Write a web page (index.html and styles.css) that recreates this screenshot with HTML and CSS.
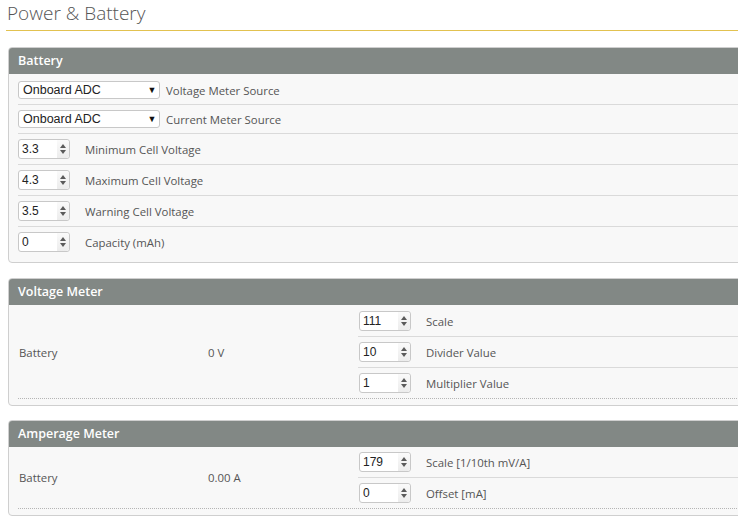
FILE: index.html
```html
<!DOCTYPE html>
<html>
<head>
<meta charset="utf-8">
<link rel="stylesheet" href="styles.css">
</head>
<body>
<div class="page">
  <div class="title">Power &amp; Battery</div>

  <div class="panel">
    <div class="panel-head">Battery</div>
    <div class="panel-body">
      <div class="row">
        <div class="select"><span>Onboard ADC</span><span class="arrow">▼</span></div>
        <span class="label sel-label">Voltage Meter Source</span>
      </div>
      <div class="row">
        <div class="select"><span>Onboard ADC</span><span class="arrow">▼</span></div>
        <span class="label sel-label">Current Meter Source</span>
      </div>
      <div class="row num">
        <div class="spin"><span class="val">3.3</span><span class="btns"><i class="up"></i><i class="down"></i></span></div>
        <span class="label">Minimum Cell Voltage</span>
      </div>
      <div class="row num">
        <div class="spin"><span class="val">4.3</span><span class="btns"><i class="up"></i><i class="down"></i></span></div>
        <span class="label">Maximum Cell Voltage</span>
      </div>
      <div class="row num">
        <div class="spin"><span class="val">3.5</span><span class="btns"><i class="up"></i><i class="down"></i></span></div>
        <span class="label">Warning Cell Voltage</span>
      </div>
      <div class="row num last">
        <div class="spin"><span class="val">0</span><span class="btns"><i class="up"></i><i class="down"></i></span></div>
        <span class="label">Capacity (mAh)</span>
      </div>
    </div>
  </div>

  <div class="panel tight">
    <div class="panel-head">Voltage Meter</div>
    <div class="panel-body meter-body">
      <div class="meter">
        <div class="m-name">Battery</div>
        <div class="m-value">0 V</div>
        <div class="m-controls">
          <div class="row num">
            <div class="spin"><span class="val">111</span><span class="btns"><i class="up"></i><i class="down"></i></span></div>
            <span class="label">Scale</span>
          </div>
          <div class="row num">
            <div class="spin"><span class="val">10</span><span class="btns"><i class="up"></i><i class="down"></i></span></div>
            <span class="label">Divider Value</span>
          </div>
          <div class="row num last">
            <div class="spin"><span class="val">1</span><span class="btns"><i class="up"></i><i class="down"></i></span></div>
            <span class="label">Multiplier Value</span>
          </div>
        </div>
      </div>
    </div>
  </div>

  <div class="panel">
    <div class="panel-head">Amperage Meter</div>
    <div class="panel-body meter-body amp">
      <div class="meter">
        <div class="m-name">Battery</div>
        <div class="m-value">0.00 A</div>
        <div class="m-controls">
          <div class="row num">
            <div class="spin"><span class="val">179</span><span class="btns"><i class="up"></i><i class="down"></i></span></div>
            <span class="label">Scale [1/10th mV/A]</span>
          </div>
          <div class="row num last">
            <div class="spin"><span class="val">0</span><span class="btns"><i class="up"></i><i class="down"></i></span></div>
            <span class="label">Offset [mA]</span>
          </div>
        </div>
      </div>
    </div>
  </div>
</div>
</body>
</html>
```

FILE: styles.css
```css
html, body {
  margin: 0;
  padding: 0;
  background: #ffffff;
  overflow: hidden;
}

body {
  font-family: "Open Sans", "Liberation Sans", sans-serif;
  font-size: 11.4px;
  color: #555555;
}

.page {
  padding-left: 8px;
  width: 760px;
}

.title {
  margin-left: -2px;
  height: 30px;
  border-bottom: 1px solid #e2c250;
  font-size: 19px;
  font-weight: 300;
  line-height: 26px;
  color: #555555;
  padding-left: 1px;
  margin-bottom: 16px;
}

.panel {
  border: 1px solid #cfcfcf;
  border-radius: 4px;
  background: #f8f8f8;
  margin-bottom: 15px;
  overflow: hidden;
}

.panel.tight {
  margin-bottom: 14px;
}

.panel-head {
  background: #828885;
  color: #ffffff;
  font-weight: 600;
  font-size: 12.5px;
  height: 26px;
  line-height: 26px;
  padding-left: 9px;
}

.panel-body {
  padding: 2px 0 5px 9px;
}

.row {
  display: flex;
  align-items: center;
  padding: 5px 0;
  border-bottom: 1px solid #dadada;
}

.row.last {
  border-bottom: none;
}

.select {
  width: 136px;
  height: 16px;
  border: 1px solid #c8c8c8;
  border-radius: 3px;
  background: #ffffff;
  display: flex;
  align-items: center;
  justify-content: space-between;
  padding: 0 0 0 4px;
  font-family: "Liberation Sans", Arial, sans-serif;
  font-size: 12.5px;
  color: #222222;
}

.select .arrow {
  font-size: 9px;
  color: #111111;
  width: 14px;
  text-align: center;
}

.sel-label {
  margin-left: 6px;
}

.spin {
  width: 50px;
  height: 18px;
  border: 1px solid #c8c8c8;
  border-radius: 3px;
  background: #ffffff;
  display: flex;
  align-items: center;
  justify-content: space-between;
  font-family: "Liberation Sans", Arial, sans-serif;
  font-size: 12px;
  color: #222222;
}

.spin .val {
  padding-left: 3px;
}

.btns {
  width: 12px;
  height: 18px;
  background: linear-gradient(#fafafa, #ececec);
  display: flex;
  flex-direction: column;
  align-items: center;
  justify-content: center;
  gap: 2px;
  border-radius: 0 3px 3px 0;
}

.btns i {
  display: block;
  width: 0;
  height: 0;
  border-left: 3.5px solid transparent;
  border-right: 3.5px solid transparent;
}

.btns .up {
  border-bottom: 4px solid #5a5a5a;
}

.btns .down {
  border-top: 4px solid #5a5a5a;
}

.num .label {
  margin-left: 15px;
}

.meter-body {
  padding: 1px 0 6px 9px;
}

.meter {
  display: flex;
  align-items: center;
  border-bottom: 1px dotted #b5b5b5;
}

.m-name {
  width: 189px;
  padding-left: 1px;
}

.m-value {
  width: 150px;
}

.m-controls {
  flex: 1;
}

.m-controls .row {
  padding: 5px 0 5px 1px;
}

.amp {
  padding-top: 0;
}
```
